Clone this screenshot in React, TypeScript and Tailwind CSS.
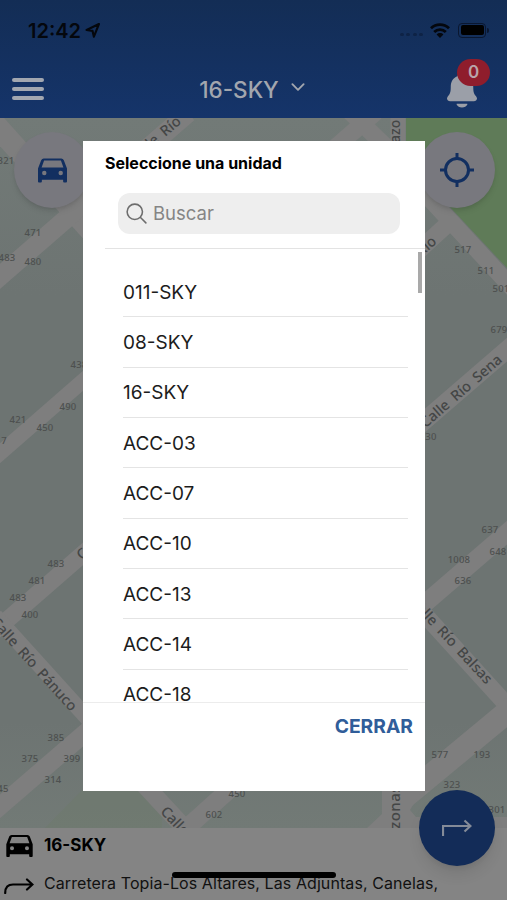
import { useState } from 'react'
import { IoChevronDown, IoNotifications, IoSearchOutline } from 'react-icons/io5'

const UNITS = ['011-SKY', '08-SKY', '16-SKY', 'ACC-03', 'ACC-07', 'ACC-10', 'ACC-13', 'ACC-14', 'ACC-18', 'ACC-20']

// [text, x, y]
const HOUSE_NUMBERS: [string, number, number][] = [
  ['321', 6, 164], ['471', 33, 236], ['483', 7, 261], ['480', 33, 265],
  ['438', 79, 368], ['490', 68, 410], ['421', 18, 423], ['450', 45, 431], ['7', 4, 444],
  ['483', 56, 567], ['481', 37, 584], ['483', 18, 601], ['400', 30, 618],
  ['385', 56, 741], ['375', 30, 762], ['399', 72, 762], ['314', 53, 783], ['45', 3, 792],
  ['450', 237, 797], ['602', 214, 818],
  ['517', 463, 253], ['511', 486, 274], ['501', 501, 292], ['679', 499, 333], ['30', 431, 440],
  ['637', 490, 533], ['648', 498, 555], ['1008', 459, 563], ['636', 463, 584],
  ['577', 440, 758], ['193', 482, 758], ['323', 452, 788], ['301', 497, 813],
]

// [text, x, y, angle]
const STREETS: [string, number, number, number][] = [
  ['Calle Río', 155, 139, -40],
  ['Río', 426, 246, -41],
  ['Calle Río Sena', 461, 391, -41],
  ['Calle Río Pánuco', 34, 664, 48],
  ['Calle Río Balsas', 451, 640, 47],
  ['Calle', 175, 821, 46],
  ['C', 82, 554, -42],
]

function CarIcon({ className }: { className?: string }) {
  return (
    <svg viewBox="0 0 30 25" className={className} fill="currentColor" fillRule="evenodd">
      <path d="M6 0h18q2 0 2.7 1.8L30 10.5V24q0 1-1 1h-2q-1 0-1-1v-2H4v2q0 1-1 1H1q-1 0-1-1V10.5L3.300 1.800Q4 0 6 0ZM6.300 2.200 3.700 9.300h22.600l-2.600-7.100ZM6.500 12.700a2.300 2.300 0 1 0 0 4.600 2.300 2.300 0 0 0 0-4.600Zm17 0a2.300 2.300 0 1 0 0 4.600 2.300 2.300 0 0 0 0-4.600Z" />
    </svg>
  )
}

function StreetMap() {
  return (
    <svg viewBox="0 118 507 710" className="block h-[710px] w-[507px]" fontFamily="'Noto Sans', sans-serif">
      <defs>
        <linearGradient id="land" x1="0" y1="0" x2="0" y2="1">
          <stop offset="0" stopColor="#727a77" />
          <stop offset="0.25" stopColor="#6d7472" />
          <stop offset="0.85" stopColor="#6d7472" />
          <stop offset="1" stopColor="#727a76" />
        </linearGradient>
      </defs>
      <rect y="118" width="507" height="710" fill="url(#land)" />
      <path d="M82 790h80v38H45Z" fill="#6e796c" opacity="0.5" />
      <path d="M406 118h101v150L406 160Z" fill="#5f7b58" />
      <g stroke="#7e7e7e" fill="none">
        <path d="M-8 121 100 241" strokeWidth="22" />
        <path d="M-10 285 188 113" strokeWidth="19" />
        <path d="M-10 462 100 366" strokeWidth="15" />
        <path d="M-10 635 100 539" strokeWidth="17" />
        <path d="M-5 616 100 732" strokeWidth="16" />
        <path d="M-10 815 100 720" strokeWidth="18" />
        <path d="M140 780 190 834M180 834 240 780" strokeWidth="18" />
        <path d="M330 152 376 112M350 112 410 170" strokeWidth="17" />
        <path d="M398 118V175" strokeWidth="15" />
        <path d="M405 172 517 293M415 254 452 220" strokeWidth="17" />
        <path d="M415 429 517 341" strokeWidth="18" />
        <path d="M415 612 517 524" strokeWidth="18" />
        <path d="M415 604 517 716" strokeWidth="17" />
        <path d="M400 801 517 704" strokeWidth="23" />
      </g>
      <path d="M382 780h43v5l-15 25 6 7h91v11H367l15-14Z" fill="#7e7e7e" />
      <g fill="#4d504f" fontSize="9.500" fontWeight="500" letterSpacing="0.200" textAnchor="middle">
        {HOUSE_NUMBERS.map(([label, x, y], i) => (
          <text key={i} x={x} y={y}>{label}</text>
        ))}
      </g>
      <g fill="#444646" fontSize="14.500" fontWeight="500" textAnchor="middle">
        {STREETS.map(([label, x, y, angle], i) => (
          <text key={i} transform={`translate(${x} ${y}) rotate(${angle})`} dy="5" wordSpacing="3">{label}</text>
        ))}
        <text transform="translate(400 143) rotate(-90)" textAnchor="start" fontSize="14">azo</text>
        <text transform="translate(400 829) rotate(-90)" textAnchor="start" fontSize="15" letterSpacing="0.500">zonas</text>
      </g>
    </svg>
  )
}

function StatusBar() {
  return (
    <div className="flex h-[60px] items-center justify-between pl-7 pr-[18px] text-[#04070d]">
      <div className="flex items-center gap-1">
        <span className="mt-[2px] text-[20px] font-semibold leading-6">12:42</span>
        <svg viewBox="0 0 14 14" className="size-[15px]" fill="none" stroke="currentColor" strokeWidth="2" strokeLinejoin="round">
          <path d="M13 1 1.500 6.500 7 7.300 8.300 12.800Z" />
        </svg>
      </div>
      <div className="flex items-center">
        <div className="mr-[7px] mt-2 flex gap-[2.500px] opacity-50">
          {[0, 1, 2, 3].map(i => <span key={i} className="h-[3px] w-[4px] rounded-full bg-[#0a1832]" />)}
        </div>
        <svg viewBox="0 0 20 15" className="mr-2 h-[15px] w-5" fill="none" stroke="currentColor" strokeWidth="2.800">
          <path d="M1 5.200C6 .3 14 .3 19 5.200M4.200 9C7.500 5.700 12.500 5.700 15.800 9" />
          <path d="M10 15 6.600 11.500c1.900-1.900 4.900-1.900 6.800 0Z" fill="currentColor" stroke="none" />
        </svg>
        <div className="h-[15px] w-[28px] rounded-[4px] border border-[#0a1730] p-[1.500px]">
          <div className="h-full rounded-[2px] bg-black" />
        </div>
        <span className="ml-px h-[5px] w-[2px] rounded-r bg-[#0a1730]" />
      </div>
    </div>
  )
}

export default function App() {
  const [query, setQuery] = useState('')
  const units = UNITS.filter(unit => unit.toLowerCase().includes(query.toLowerCase()))

  return (
    <div className="relative h-[900px] w-[507px] overflow-hidden bg-[#848484] font-['Inter',sans-serif]">
      <header className="h-[118px] bg-linear-to-b from-[#132d55] to-[#15346a]">
        <StatusBar />
        <div className="grid h-[58px] grid-cols-3 items-center px-3">
          <button className="flex w-8 flex-col gap-[5px]" aria-label="Menú">
            <span className="h-[4px] w-full rounded-full bg-[#a2a7b0]" />
            <span className="h-[4px] w-full rounded-full bg-[#a2a7b0]" />
            <span className="h-[4px] w-full rounded-full bg-[#a2a7b0]" />
          </button>
          <button className="flex items-center justify-center gap-[9px] whitespace-nowrap text-[#a2a6ae]">
            <span className="mt-[2px] text-[22.500px] font-medium leading-7">16-SKY</span>
            <IoChevronDown className="-mt-[5px] size-5" />
          </button>
          <button className="relative mr-[13px] mt-px justify-self-end text-[#9b9fa8]" aria-label="Notificaciones">
            <IoNotifications className="size-10" />
            <span className="absolute -top-[11px] left-[15px] flex h-[27px] w-[33px] items-center justify-center rounded-full bg-[#8f1d2c] pt-[2px] text-[17px] font-semibold text-[#b9a5ab]">0</span>
          </button>
        </div>
      </header>

      <main className="relative h-[710px]">
        <StreetMap />
        <button className="absolute left-[14px] top-[14px] flex size-[76px] items-center justify-center rounded-full bg-[#78787e] text-[#122f60] shadow-md">
          <CarIcon className="h-[25px] w-[29px]" />
        </button>
        <button className="absolute right-[12px] top-[14px] flex size-[76px] items-center justify-center rounded-full bg-[#78787e] text-[#122f60] shadow-md">
          <svg viewBox="0 0 34 34" className="size-[34px]" fill="none" stroke="currentColor" strokeWidth="3">
            <circle cx="17" cy="17" r="11.500" />
            <path d="M17 0v6M17 28v6M0 17h6M28 17h6" />
          </svg>
        </button>
        <button className="absolute -bottom-[38px] right-[12px] z-10 flex size-[76px] items-center justify-center rounded-full bg-[#132c58] text-[#848b98] shadow-lg">
          <svg viewBox="0 0 30 18" className="h-[18px] w-[30px]" fill="none" stroke="currentColor" strokeWidth="2.200">
            <path d="M1 17V7h27M22.500 1.500 28.500 7l-6 5.500" />
          </svg>
        </button>
      </main>

      <footer className="h-[72px] text-[#111]">
        <div className="flex h-[34px] items-center gap-[11px] pl-[6px]">
          <CarIcon className="mt-0.5 h-[22px] w-[27px] text-black" />
          <span className="-mt-px text-[17px] font-bold leading-5 text-black">16-SKY</span>
        </div>
        <div className="flex h-[43px] items-center gap-[10px] pl-[4px]">
          <svg viewBox="0 0 30 16" className="mt-1 h-4 w-[30px]" fill="none" stroke="black" strokeWidth="2.200" strokeLinecap="round">
            <path d="M1.200 15C1.200 9 4 6.500 9 6.500h19M23 1.500l5.500 5-5.500 5" />
          </svg>
          <span className="-mt-px whitespace-nowrap text-[16px] leading-5 tracking-[0.080px]">Carretera Topia-Los Altares, Las Adjuntas, Canelas,</span>
        </div>
      </footer>

      <div className="absolute inset-0 z-20 pl-[83px] pt-[141px]">
        <section role="dialog" className="flex h-[650px] w-[342px] flex-col bg-white">
          <div className="ml-[22px] h-[108px] shrink-0 border-b border-[#e3e3e3] pt-[11px]">
            <h2 className="text-[16px] font-bold leading-[22px] text-black">Seleccione una unidad</h2>
            <label className="ml-[13px] mt-[19px] flex h-[41px] w-[282px] items-center rounded-xl bg-[#eeeeee] pl-[6px]">
              <IoSearchOutline className="size-[25px] shrink-0 text-[#6d6d6d]" />
              <input
                className="ml-1 w-full bg-transparent text-[18.500px] outline-none placeholder:text-[#858585]"
                placeholder="Buscar"
                value={query}
                onChange={e => setQuery(e.target.value)}
              />
            </label>
          </div>
          <div className="relative h-[453px] overflow-hidden pl-10 pr-[17px] pt-[18px]">
            {units.map(unit => (
              <div key={unit} className="flex h-[50.350px] items-center border-b border-[#e4e4e4] pt-[2.500px] text-[19px] text-[#1c1c1c]">
                {unit}
              </div>
            ))}
            <span className="absolute right-[3px] top-[3px] h-[41px] w-[4px] bg-[#a9a9a9]" />
          </div>
          <div className="flex flex-1 items-start justify-end border-t border-[#ececec] pr-3 pt-[11px]">
            <button className="text-[19.300px] font-bold leading-6 text-[#305d99]">CERRAR</button>
          </div>
        </section>
      </div>

      <div className="absolute bottom-[22px] left-[172px] z-30 h-[6px] w-[164px] rounded-full bg-black" />
    </div>
  )
}
